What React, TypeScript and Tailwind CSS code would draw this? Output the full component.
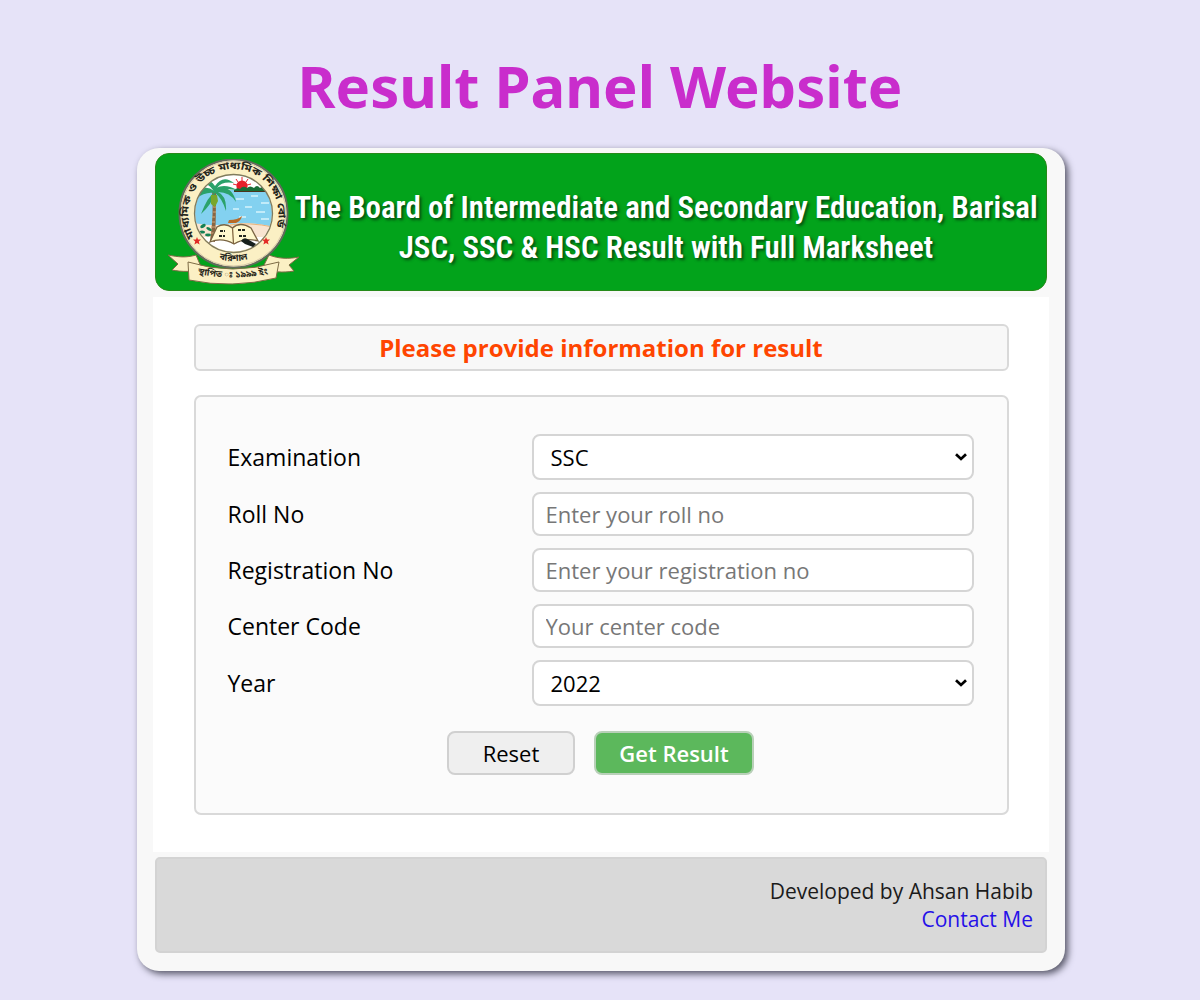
import React from "react";

const controlClass =
  "w-[442px] rounded-[8px] border-2 border-[#d5d5d5] bg-white text-[22px] text-black outline-none";

function Emblem() {
  return (
    <svg width="132" height="126" viewBox="0 0 132 126" className="shrink-0" fontFamily="'Noto Sans Bengali', 'Noto Sans', sans-serif">
      <defs>
        <clipPath id="scene"><circle cx="65.5" cy="54" r="38.5" /></clipPath>
        <path id="ringTop" d="M26.5 78 A45 45 0 1 1 105 76" />
        <path id="ringBottom" d="M33 90 A49.5 49.5 0 0 0 98 90" />
      </defs>
      <g fill="#fbf0c4" stroke="#7d6b45" strokeWidth="1">
        <path d="M0 96 C10 98 18 99 28 96 L34 110 C24 113 14 113 4 111 L10 105 Z" />
        <path d="M131 98 C121 100 111 100 101 96 L94 110 C104 113 115 114 126 112 L121 106 Z" />
      </g>
      <circle cx="65.5" cy="54.5" r="54" fill="#fbf0c4" stroke="#626a5c" strokeWidth="2" />
      <circle cx="65.5" cy="54.5" r="52.5" fill="none" stroke="#d9c9a9" strokeWidth="1" />
      <g clipPath="url(#scene)">
        <rect x="26" y="14" width="80" height="80" fill="#fff" />
        <path d="M26 31 H105 V68 Q80 63 60 66 L26 66 Z" fill="#83d1f0" />
        <g stroke="#d6f4fc" strokeWidth="1.3">
          <path d="M68 40h8M83 37h7M93 44h8M65 50h6M77 48h7M88 53h9M71 58h7M93 60h8" />
        </g>
        <g fill="#e6202b">
          <circle cx="74" cy="27" r="5.6" />
          <g stroke="#e6202b" strokeWidth="1"><path d="M74 18v4M68 20l2 3M80 20l-2 3M65 25l4 1M83 25l-4 1" /></g>
        </g>
        <path d="M66 31 q3-3 6-1 q3-4 7-1 q3-3 7 0 q3-4 6 0 q4-3 7 2 v2 H66Z" fill="#176d37" />
        <path d="M66 32.5 H104" stroke="#4c351d" strokeWidth="1.2" />
        <path d="M26 64 Q46 68 62 65 Q83 62 106 68 V78 H26Z" fill="#f8e4d0" />
        <path d="M62 66 Q82 63 105 68" fill="none" stroke="#e7b47c" strokeWidth="1" />
        <path d="M61 61 q9 0 13-4 q-1 5-6 7 h-8Z" fill="#b86a28" />
        <path d="M42 82 Q46 55 44 32 L48 32 Q48 61 47 83Z" fill="#8a6542" />
        <path d="M44.5 38h3M45 43h3M45 48h3M45 53h3M44 58h3M44 63h3M43 68h4M43 74h4" stroke="#d1a879" strokeWidth="1" />
        <g fill="#2ba26a">
          <path d="M46 32 Q34 22 24 42 Q37 32 46 34 Q40 37 33 55 Q44 45 47 34 Q54 39 58 52 Q59 37 50 33 Q62 33 68 43 Q64 26 49 29 Q54 22 66 24 Q55 15 47 27 Q41 18 31 22 Q40 24 45 31Z" />
          <path d="M42 31 Q29 28 22 36 Q31 34 42 31M48 29 Q57 24 69 31 Q57 30 48 29" />
        </g>
        <path d="M43 36h6l1 6-3 6-4-3Z" fill="#78a62c" />
        <g fill="#148154">
          <ellipse cx="35" cy="67" rx="3" ry="1.7" transform="rotate(-30 35 67)" />
          <ellipse cx="41" cy="70" rx="3" ry="1.5" transform="rotate(30 41 70)" />
          <ellipse cx="34" cy="73" rx="3" ry="1.6" /><ellipse cx="40" cy="76" rx="3" ry="1.4" />
        </g>
      </g>
      <circle cx="65.5" cy="54.5" r="39" fill="none" stroke="#807b5d" strokeWidth="1.3" />
      <path d="M49 68 Q57 63 64.5 69 Q72 62 83 69 L90 82 Q77 78 66 85 Q54 78 42 83Z" fill="#fff8ce" stroke="#796443" strokeWidth="1.3" />
      <path d="M64.5 69 L65.5 85" stroke="#80643f" strokeWidth="1.2" />
      <path d="M52 72h5M51 77h6M70 71h7M71 77h7" stroke="#242820" strokeWidth="2" strokeDasharray="3 1" />
      <path d="M73 82 q3-5 8-1 l7 4 -3 3 -8-3Z" fill="#17201d" />
      <path d="M29 78 l1 2.5 3 .1 -2.2 2 .8 3 -2.6-1.6 -2.6 1.6 .8-3 -2.2-2 3-.1ZM98 78 l1 2.5 3 .1 -2.2 2 .8 3 -2.6-1.6 -2.6 1.6 .8-3 -2.2-2 3-.1Z" fill="#e22b26" />
      <g fill="#24251b" fontWeight="700">
        <text fontSize="10"><textPath href="#ringTop" textLength="178" lengthAdjust="spacingAndGlyphs">মাধ্যমিক ও উচ্চ মাধ্যমিক শিক্ষা বোর্ড</textPath></text>
        <text fontSize="9"><textPath href="#ringBottom" startOffset="50%" textAnchor="middle">বরিশাল</textPath></text>
      </g>
      <path id="ribbon" d="M20 103 Q64 117 111 103 L108 119 Q64 130 21 121Z" fill="#fbf0c4" stroke="#7d6b45" strokeWidth="1" />
      <path id="ribbonText" d="M25 114 Q65 123 105 114" fill="none" />
      <text fontSize="9" fontWeight="700" fill="#292719"><textPath href="#ribbonText" startOffset="50%" textAnchor="middle">স্থাপিত ঃ ১৯৯৯ ইং</textPath></text>
    </svg>
  );
}

function SelectField({ value }: { value: string }) {
  return (
    <div className="relative h-[46px] w-[442px]">
      <select aria-label={value} className={`${controlClass} h-[46px] appearance-none pl-[17px]`} defaultValue={value}>
        <option>{value}</option>
      </select>
      <svg className="pointer-events-none absolute right-[6px] top-[18px]" width="14" height="10" viewBox="0 0 14 10">
        <path d="M2 2.2 L7 7 L12 2.2" fill="none" stroke="#000" strokeWidth="2.7" />
      </svg>
    </div>
  );
}

function Row({ label, children }: { label: string; children: React.ReactNode }) {
  return (
    <div className="flex items-center justify-between">
      <label className="text-[23px] leading-[32px] text-black">{label}</label>
      {children}
    </div>
  );
}

export default function App() {
  return (
    <main className="flex h-[1000px] w-[1200px] flex-col items-center overflow-hidden bg-[#e6e3f8] font-['Open_Sans',sans-serif]">
      <h1 className="flex h-[148px] items-start justify-center whitespace-nowrap pt-[46px] font-['Noto_Sans',sans-serif] text-[58px] font-bold leading-[80px] text-[#c92dcc]">
        <span className="inline-block">Result Panel Website</span>
      </h1>
      <div className="ml-[2px] h-[823px] w-[928px] rounded-[22px] bg-[#f8f8f8] px-[16px] pt-[5px] shadow-[3px_3px_7px_#555566]">
        <header className="mx-[2px] flex h-[138px] items-center rounded-[14px] border border-[#268a19] bg-[#02a31b]">
          <div className="flex w-[146px] shrink-0 pl-[12px]"><Emblem /></div>
          <div className="flex w-[728px] flex-col items-center whitespace-nowrap pt-[11px] font-['Roboto',sans-serif] text-[31px] font-semibold leading-[40px] text-white [font-stretch:75%] [text-shadow:2px_2px_3px_#064d10]">
            <div>The Board of Intermediate and Secondary Education, Barisal</div>
            <div>JSC, SSC &amp; HSC Result with Full Marksheet</div>
          </div>
        </header>
        <section className="mt-[6px] flex h-[555px] flex-col items-center bg-white pt-[27px]">
          <h2 className="flex h-[47px] w-[815px] items-center justify-center rounded-[6px] border-2 border-[#d9d9d9] bg-[#f8f8f8] text-[24px] font-bold text-[#ff4500]">
            Please provide information for result
          </h2>
          <form className="mt-[24px] h-[420px] w-[815px] rounded-[7px] border-2 border-[#d9d9d9] bg-[#fbfbfb] pl-[32px] pr-[33px] pt-[37px]">
            <div className="flex flex-col gap-[12px]">
              <Row label="Examination"><SelectField value="SSC" /></Row>
              <Row label="Roll No"><input className={`${controlClass} h-[44px] pl-[12px] placeholder:text-[#777777]`} placeholder="Enter your roll no" /></Row>
              <Row label="Registration No"><input className={`${controlClass} h-[44px] pl-[12px] placeholder:text-[#777777]`} placeholder="Enter your registration no" /></Row>
              <Row label="Center Code"><input className={`${controlClass} h-[44px] pl-[12px] placeholder:text-[#777777]`} placeholder="Your center code" /></Row>
              <Row label="Year"><SelectField value="2022" /></Row>
            </div>
            <div className="mt-[25px] flex justify-center gap-[19px]">
              <button type="reset" className="h-[44px] w-[128px] rounded-[8px] border-2 border-[#d0d0d0] bg-[#efefef] text-[22px] font-medium text-black">Reset</button>
              <button type="button" className="h-[44px] w-[160px] rounded-[8px] border-2 border-[#b8d0b8] bg-[#5cb85c] text-[22px] font-semibold text-white">Get Result</button>
            </div>
          </form>
        </section>
        <footer className="mx-[2px] mt-[5px] flex h-[96px] flex-col items-end rounded-[5px] border-2 border-[#d3d3d3] bg-[#d9d9d9] pr-[12px] pt-[18px] text-[21px] leading-[28px] text-[#1b1b1b]">
          <span>Developed by Ahsan Habib</span>
          <a className="text-[#2510e8]">Contact Me</a>
        </footer>
      </div>
    </main>
  );
}
